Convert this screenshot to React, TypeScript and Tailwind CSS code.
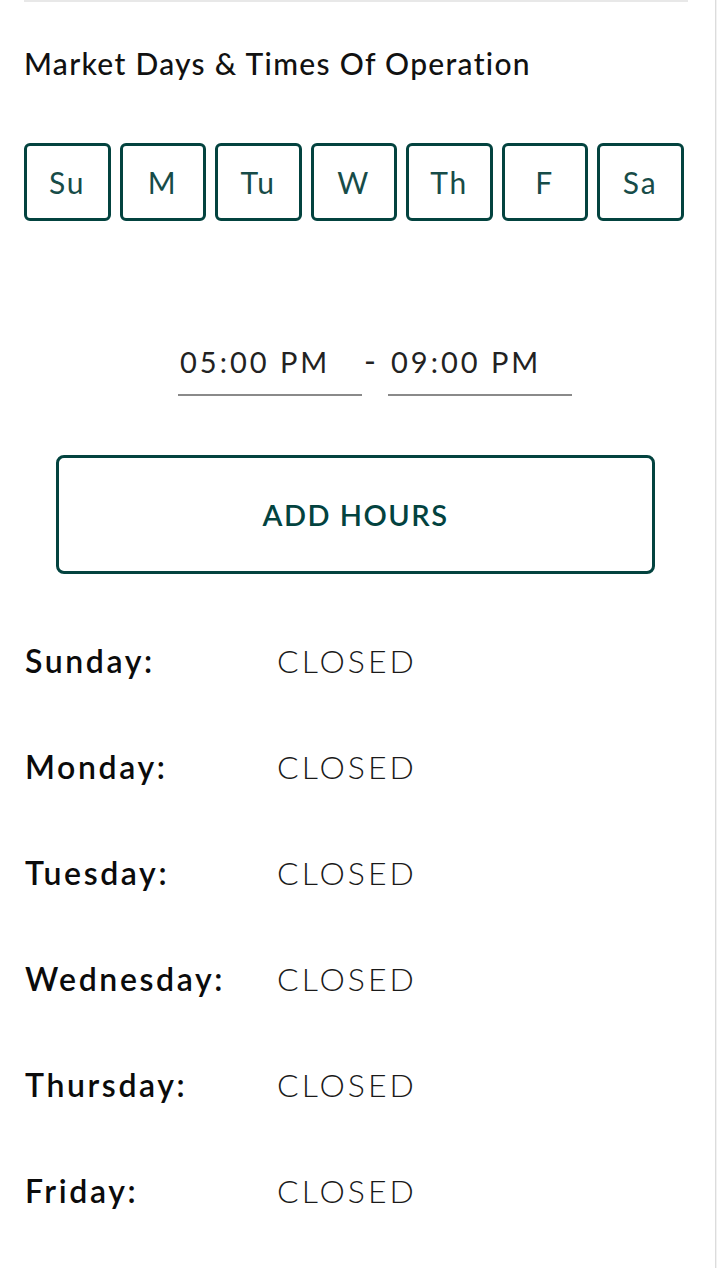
import React from "react";

const DAYS = ["Su", "M", "Tu", "W", "Th", "F", "Sa"];
const WEEK = ["Sunday", "Monday", "Tuesday", "Wednesday", "Thursday", "Friday"];

export default function App() {
  return (
    <div className="flex min-h-screen bg-white font-['Lato',sans-serif]">
      <div className="w-[716px] border-r border-[#dcdcdc] px-[24px]">
        <div className="h-[2px] w-[664px] bg-[#e8e8e8]" />

        <h2 className="mt-[43px] text-[30px] leading-[36px] font-medium tracking-[1.3px] text-[#111]">
          Market Days &amp; Times Of Operation
        </h2>

        <div className="mt-[62px] flex gap-[9px]">
          {DAYS.map((d) => (
            <button
              key={d}
              className="flex h-[78px] w-[86.5px] items-center justify-center rounded-[6px] border-[3px] border-[#03433f] text-[30px] font-normal tracking-[2px] text-[#174c48]"
            >
              {d}
            </button>
          ))}
        </div>

        <div className="mt-[123px] flex pl-[154px]">
          <div className="w-[184px] border-b-2 border-[#8a8a8a] pb-[14px] pl-[2px] text-[29px] leading-[36px] tracking-[3px] text-[#222]">
            05:00 PM
          </div>
          <div className="flex w-[26px] justify-start pl-[2px] text-[32px] leading-[34px] text-[#222]">
            -
          </div>
          <div className="w-[184px] border-b-2 border-[#8a8a8a] pb-[14px] pl-[3px] text-[29px] leading-[36px] tracking-[3px] text-[#222]">
            09:00 PM
          </div>
        </div>

        <button className="ml-[32px] mt-[59px] flex h-[119px] w-[599px] items-center justify-center rounded-[8px] border-[3px] border-[#03433f] text-[29px] font-semibold tracking-[1.5px] text-[#03433f]">
          ADD HOURS
        </button>

        <div className="mt-[34px]">
          {WEEK.map((w) => (
            <div key={w} className="flex h-[106px] items-center text-[32px] leading-[40px]">
              <span className="w-[253px] pl-[1px] font-semibold tracking-[2.6px] text-[#0b0b0b]">{w}:</span>
              <span className="font-light tracking-[3px] text-[#1a1a1a]">CLOSED</span>
            </div>
          ))}
        </div>
      </div>
      <div className="w-[1px] bg-[#f2f2f2]" />
    </div>
  );
}
